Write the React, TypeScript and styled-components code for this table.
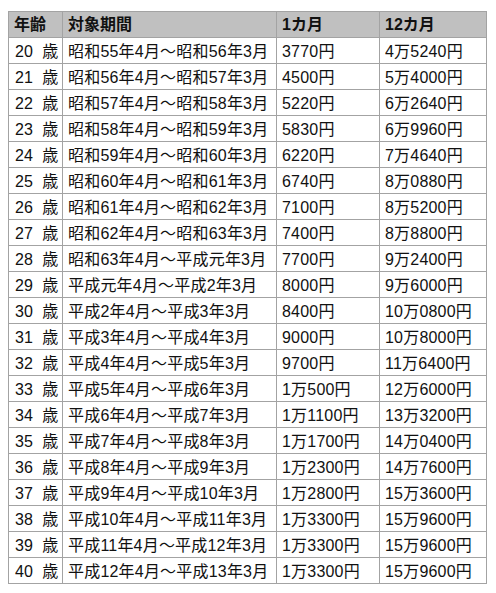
import React from "react";
import styled, { createGlobalStyle } from "styled-components";

const Global = createGlobalStyle`
  html, body { margin: 0; padding: 0; background: #ffffff; }
  body { font-family: "Liberation Sans", "Noto Sans CJK JP", sans-serif; color: #111; }
`;

const Page = styled.div`
  padding: 11px 0 0 8px;
`;

const Table = styled.table`
  border-collapse: collapse;
  table-layout: fixed;
  width: 478px;
  font-size: 16px;
`;

const HeadCell = styled.th`
  background: #c0c0c0;
  border: 1px solid #a3a3a3;
  font-weight: bold;
  text-align: left;
  padding: 1px 0 0 5px;
  height: 24px;
  line-height: 18px;
  white-space: nowrap;
  overflow: hidden;
`;

const Cell = styled.td<{ $age?: boolean }>`
  border: 1px solid #a3a3a3;
  padding: 2px 0 0 ${(p) => (p.$age ? 6 : 5)}px;
  height: 23px;
  line-height: 18px;
  white-space: nowrap;
  overflow: hidden;
  word-spacing: ${(p) => (p.$age ? "5px" : "normal")};
  letter-spacing: ${(p) => (p.$age ? "0" : "0.2px")};
`;

const rows: [number, string, string, string][] = [
  [20, "昭和55年4月～昭和56年3月", "3770円", "4万5240円"],
  [21, "昭和56年4月～昭和57年3月", "4500円", "5万4000円"],
  [22, "昭和57年4月～昭和58年3月", "5220円", "6万2640円"],
  [23, "昭和58年4月～昭和59年3月", "5830円", "6万9960円"],
  [24, "昭和59年4月～昭和60年3月", "6220円", "7万4640円"],
  [25, "昭和60年4月～昭和61年3月", "6740円", "8万0880円"],
  [26, "昭和61年4月～昭和62年3月", "7100円", "8万5200円"],
  [27, "昭和62年4月～昭和63年3月", "7400円", "8万8800円"],
  [28, "昭和63年4月～平成元年3月", "7700円", "9万2400円"],
  [29, "平成元年4月～平成2年3月", "8000円", "9万6000円"],
  [30, "平成2年4月～平成3年3月", "8400円", "10万0800円"],
  [31, "平成3年4月～平成4年3月", "9000円", "10万8000円"],
  [32, "平成4年4月～平成5年3月", "9700円", "11万6400円"],
  [33, "平成5年4月～平成6年3月", "1万500円", "12万6000円"],
  [34, "平成6年4月～平成7年3月", "1万1100円", "13万3200円"],
  [35, "平成7年4月～平成8年3月", "1万1700円", "14万0400円"],
  [36, "平成8年4月～平成9年3月", "1万2300円", "14万7600円"],
  [37, "平成9年4月～平成10年3月", "1万2800円", "15万3600円"],
  [38, "平成10年4月～平成11年3月", "1万3300円", "15万9600円"],
  [39, "平成11年4月～平成12年3月", "1万3300円", "15万9600円"],
  [40, "平成12年4月～平成13年3月", "1万3300円", "15万9600円"],
];

export default function App() {
  return (
    <Page>
      <Global />
      <Table>
        <colgroup>
          <col style={{ width: 54 }} />
          <col style={{ width: 214 }} />
          <col style={{ width: 103 }} />
          <col style={{ width: 107 }} />
        </colgroup>
        <thead>
          <tr>
            <HeadCell>年齢</HeadCell>
            <HeadCell>対象期間</HeadCell>
            <HeadCell>1カ月</HeadCell>
            <HeadCell>12カ月</HeadCell>
          </tr>
        </thead>
        <tbody>
          {rows.map(([age, period, m1, m12]) => (
            <tr key={age}>
              <Cell $age>{`${age} 歳`}</Cell>
              <Cell>{period}</Cell>
              <Cell>{m1}</Cell>
              <Cell>{m12}</Cell>
            </tr>
          ))}
        </tbody>
      </Table>
    </Page>
  );
}
